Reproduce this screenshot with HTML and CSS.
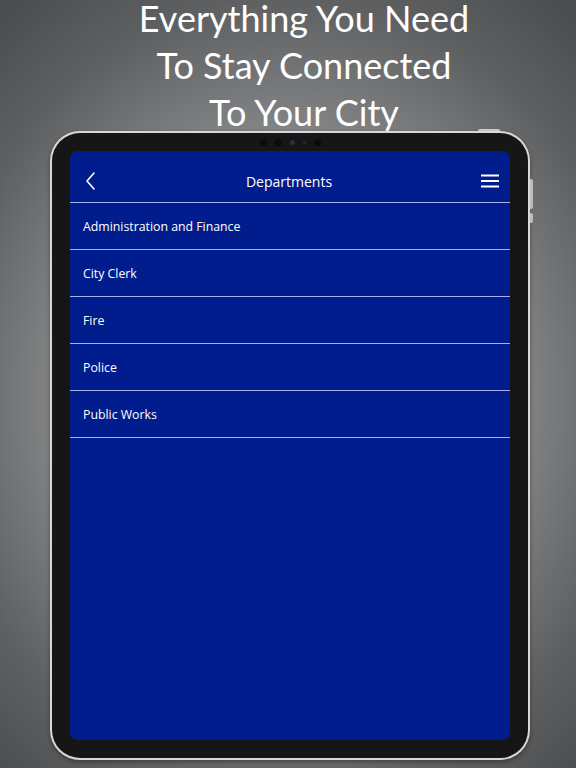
FILE: index.html
```html
<!DOCTYPE html>
<html>
<head>
<meta charset="utf-8">
<link rel="stylesheet" href="styles.css">
</head>
<body>
<div class="page">
  <h1 class="headline"><span>Everything You Need</span><span>To Stay Connected</span><span>To Your City</span></h1>
  <div class="device">
    <div class="side-btn btn-a"></div>
    <div class="side-btn btn-b"></div>
    <div class="top-btn"></div>
    <div class="bezel">
      <div class="cams">
        <span class="cam"></span><span class="cam"></span><span class="cam blue"></span><span class="cam tiny"></span><span class="cam"></span>
      </div>
      <div class="screen">
        <div class="appbar">
          <svg class="back" width="14" height="20" viewBox="0 0 14 20"><path d="M10 2 L3 10 L10 18" fill="none" stroke="#fff" stroke-width="1.6" stroke-linecap="round" stroke-linejoin="round"/></svg>
          <div class="title">Departments</div>
          <svg class="menu" width="20" height="16" viewBox="0 0 20 16"><path d="M1 2.5 H19 M1 8 H19 M1 13.5 H19" stroke="#fff" stroke-width="1.8"/></svg>
        </div>
        <ul class="list">
          <li>Administration and Finance</li>
          <li>City Clerk</li>
          <li>Fire</li>
          <li>Police</li>
          <li>Public Works</li>
        </ul>
      </div>
    </div>
  </div>
</div>
</body>
</html>
```
FILE: styles.css
```css
html, body { margin: 0; padding: 0; }
body {
  width: 576px; height: 768px; overflow: hidden;
  background: radial-gradient(ellipse 75% 65% at 50% 52%, #b4b4b4 0%, #8f9091 45%, #5f6061 80%, #4d4e4f 100%);
  font-family: "Open Sans", sans-serif;
}
.page { display: flex; flex-direction: column; align-items: flex-start; }
.headline {
  margin: 0; width: 576px; padding: 1px 0 0 32px; box-sizing: border-box;
  display: flex; flex-direction: column; align-items: center; gap: 13px;
  color: #fff; font-family: Lato, sans-serif; font-weight: 400;
  font-size: 36px; line-height: 34px; height: 131px;
}
.headline span { display: block; white-space: nowrap; }
.device {
  position: relative;
  margin-left: 50px; width: 480px; height: 629px; box-sizing: border-box;
  border-radius: 30px; background: #d8d8d8; padding: 2px;
  box-shadow: 0 2px 4px rgba(0,0,0,0.35);
}
.side-btn { position: absolute; right: -3px; width: 3px; background: #bcbcbc; border-radius: 0 2px 2px 0; }
.btn-a { top: 48px; height: 30px; }
.btn-b { top: 82px; height: 10px; }
.top-btn { position: absolute; top: -2px; left: 428px; width: 22px; height: 2px; background: #c8c8c8; border-radius: 2px 2px 0 0; }
.bezel {
  width: 100%; height: 100%; box-sizing: border-box;
  background: #161616; border-radius: 28px; padding: 18px;
  display: flex; flex-direction: column; position: relative;
}
.cams { position: absolute; top: 6px; left: 0; right: 0; display: flex; justify-content: center; align-items: center; gap: 8px; }
.cam { width: 7px; height: 7px; border-radius: 50%; background: #0b0b0b; }
.cam.blue { background: #27314a; width: 5px; height: 5px; }
.cam.tiny { width: 3px; height: 3px; background: #2a2a2a; }
.screen {
  flex: 1; background: #011d8d; border-radius: 8px; overflow: hidden;
  display: flex; flex-direction: column;
}
.appbar {
  height: 52px; box-sizing: border-box; display: flex; align-items: center; justify-content: space-between;
  padding: 9px 10px 0 14px; border-bottom: 1px solid #a9b2ec; color: #fff;
}
.title { font-size: 14px; color: #fff; }
.back { display: block; }
.menu { display: block; }
.list { list-style: none; margin: 0; padding: 0; }
.list li {
  height: 46px; line-height: 48px; padding-left: 13px; color: #fff;
  font-size: 12.3px; border-bottom: 1px solid #a9b2ec;
}
```
